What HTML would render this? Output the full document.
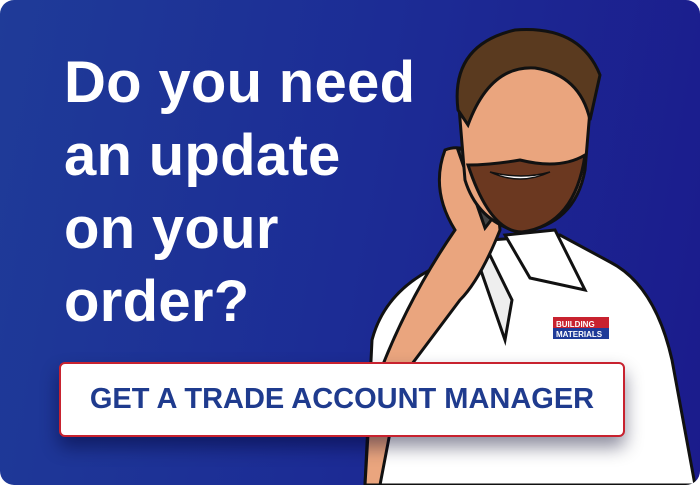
<!DOCTYPE html>
<html><head><style>
body{margin:0;background:#fff;}
.c{position:relative;width:700px;height:485px;border-radius:14px;overflow:hidden;background:linear-gradient(100deg,#1f3b98 0%,#1c2c95 50%,#1b1b8c 100%);font-family:"Liberation Sans",sans-serif;}
.h{position:absolute;left:64px;top:46px;color:#fff;font-weight:bold;font-size:58px;line-height:73px;letter-spacing:0.3px;}
.b{position:absolute;left:59px;top:362px;width:562px;height:71px;background:#fff;border:2px solid #c8222f;border-radius:6px;box-shadow:0 10px 18px rgba(0,0,40,.45);color:#1f3b8e;font-weight:bold;font-size:29px;display:flex;align-items:center;justify-content:center;}
</style></head><body><div class="c">
<svg width="700" height="485" style="position:absolute;left:0;top:0">
<g stroke="#111" stroke-width="3">
<path d="M365 485 L372 340 Q385 290 440 265 L490 240 L560 235 L610 262 Q655 285 672 360 L695 485 Z" fill="#fff"/>
<path d="M555 230 L585 290 L530 278 L505 235 Z" fill="#fff"/>
<path d="M485 245 L512 300 L505 340 L478 262 Z" fill="#eee"/>
<path d="M455 230 Q430 190 445 150 Q470 140 495 175 L500 230 Q480 280 460 300 L400 380 L380 485 L365 485 L370 400 Q400 310 455 230 Z" fill="#eaa57e"/>
<path d="M458 150 L472 145 L495 215 L485 228 Z" fill="#444"/>
<path d="M458 95 Q460 40 525 38 Q590 40 590 110 L585 170 Q575 225 520 232 Q478 222 465 180 Z" fill="#eaa57e"/>
<path d="M468 165 Q490 232 522 232 Q575 225 585 155 Q560 170 520 160 Q490 165 468 165Z" fill="#6b3820"/>
<path d="M490 172 Q520 186 550 172 Q522 180 490 172Z" fill="#fff" stroke-width="1.5"/>
<path d="M458 110 Q450 45 515 30 Q580 25 600 75 L590 120 Q580 75 535 68 Q490 65 468 125 Z" fill="#5a3a1f"/>
</g>
<rect x="553" y="317" width="56" height="20" fill="#c8222f"/>
<rect x="553" y="328" width="56" height="11" fill="#1f3b98"/>
<text x="556" y="327" font-size="8" font-weight="bold" fill="#fff" font-family="Liberation Sans">BUILDING</text>
<text x="556" y="337" font-size="8" font-weight="bold" fill="#fff" font-family="Liberation Sans">MATERIALS</text>
</svg>
<div class="h">Do you need<br>an update<br>on your<br>order?</div>
<div class="b">GET A TRADE ACCOUNT MANAGER</div>
</div></body></html>
